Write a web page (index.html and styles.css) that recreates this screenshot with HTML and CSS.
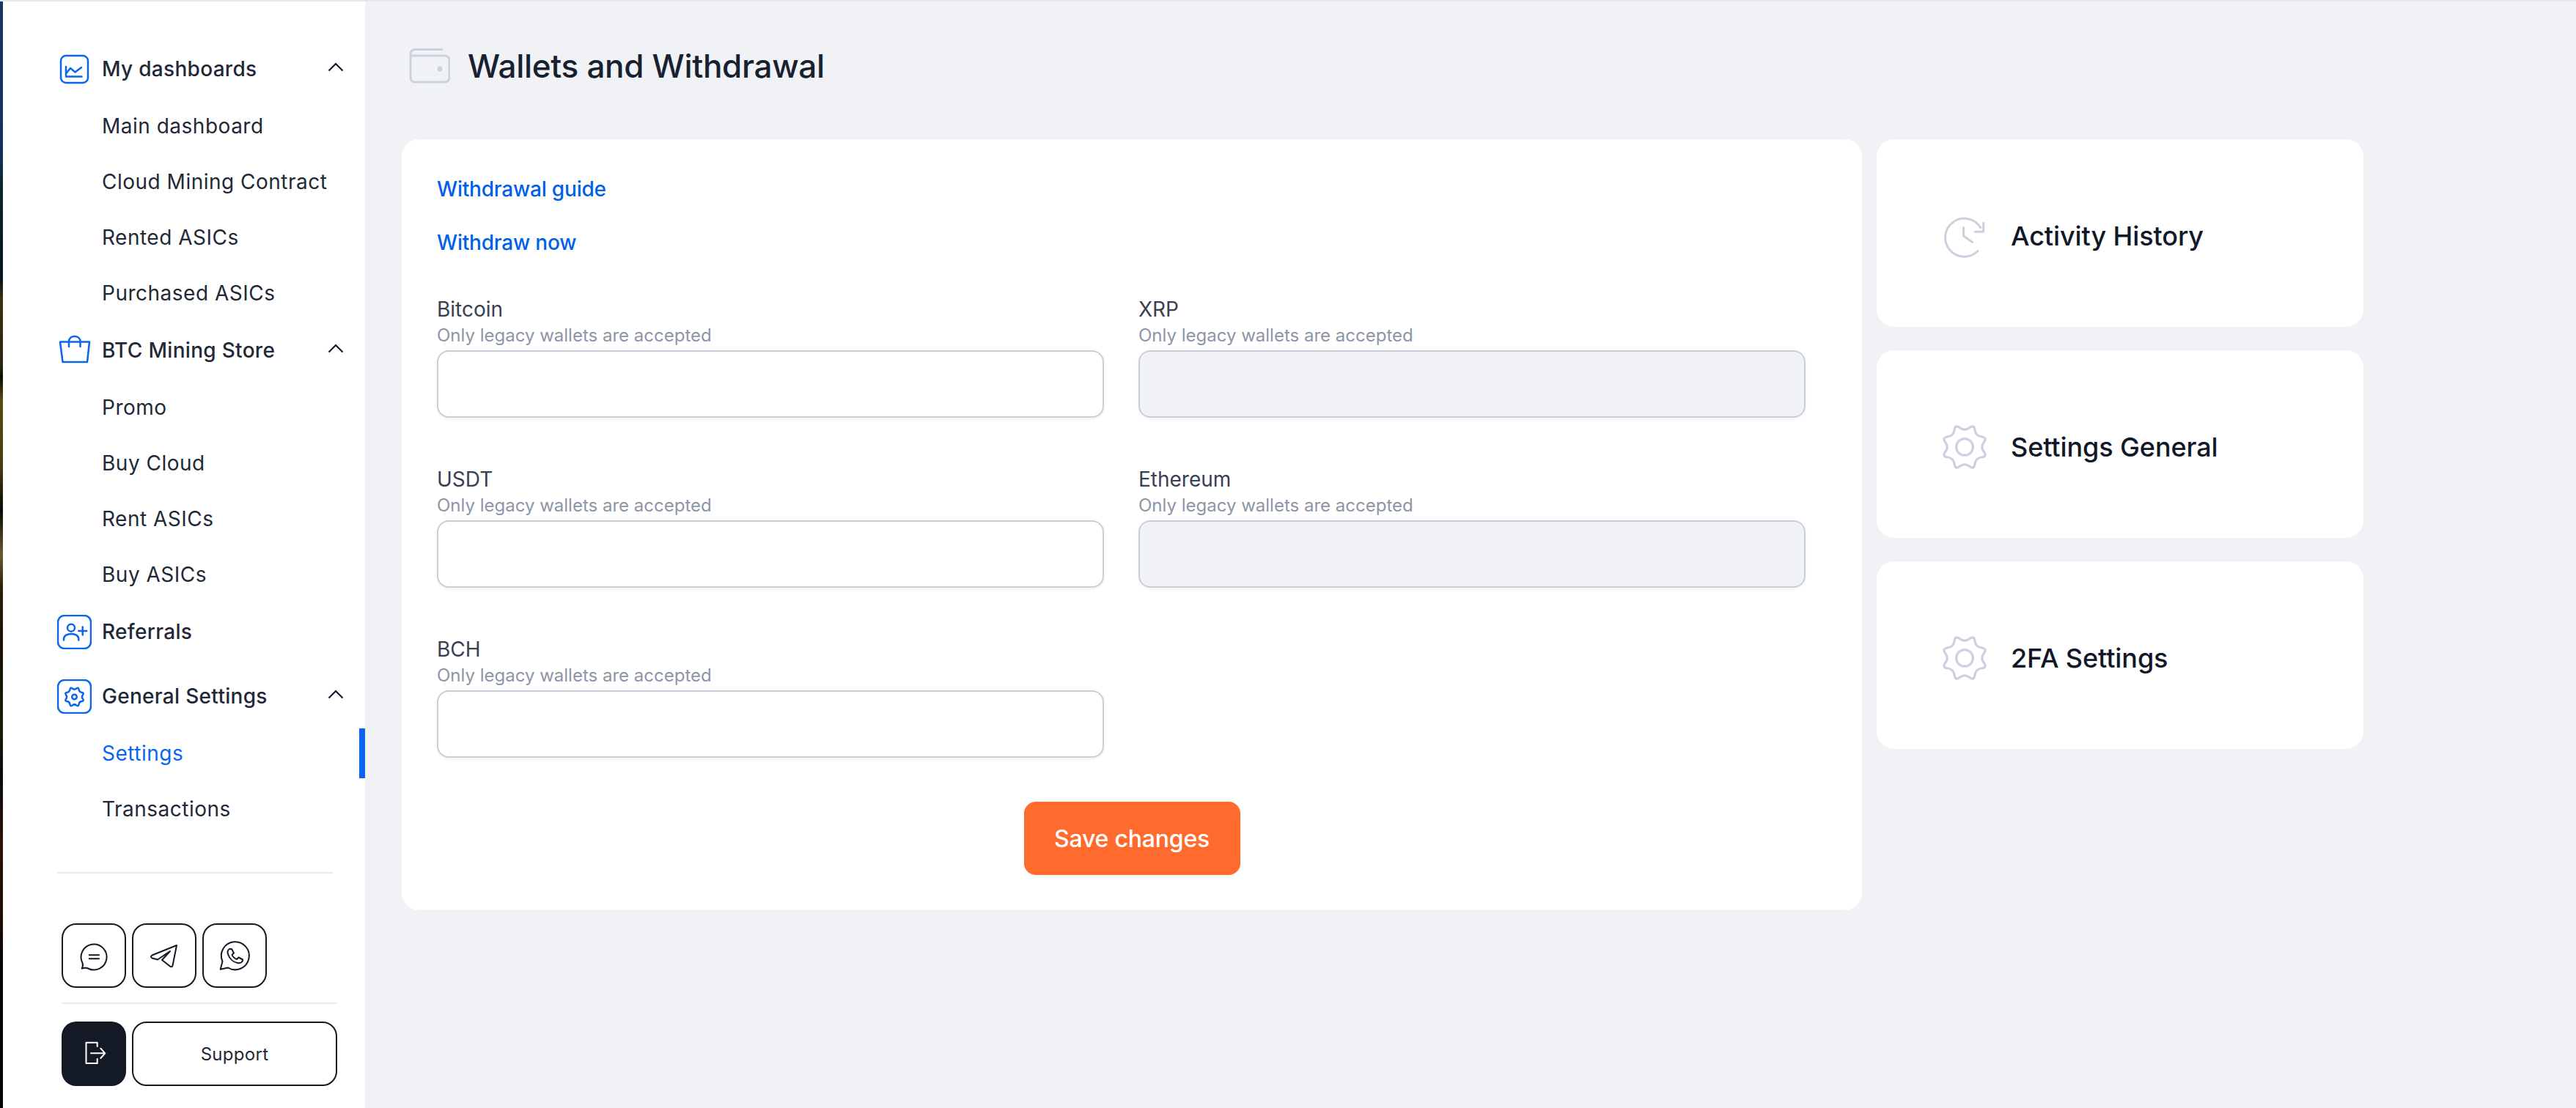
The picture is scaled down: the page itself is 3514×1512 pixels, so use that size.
FILE: index.html
```html
<!DOCTYPE html>
<html lang="en">
<head>
<meta charset="utf-8">
<title>Wallets and Withdrawal</title>
<link rel="stylesheet" href="styles.css">
</head>
<body>
<div class="strip"></div>
<div class="app">
<aside class="sidebar">
  <nav class="nav">
    <div class="head">
      <span class="head-icon"><svg class="ico-blue" width="47" height="47" viewBox="0 0 47 47"><rect x="5" y="5" width="37" height="37" rx="7"/><path d="M12 20V33.5H33.5"/><path d="M12 29.5L18 22L24.5 27.5L33 21"/></svg></span>
      <span class="head-label">My dashboards</span>
      <svg class="chev" width="22" height="13" viewBox="0 0 22 13"><path d="M1.5 11.5L11 2L20.5 11.5"/></svg>
    </div>
    <a class="sub">Main dashboard</a>
    <a class="sub">Cloud Mining Contract</a>
    <a class="sub">Rented ASICs</a>
    <a class="sub">Purchased ASICs</a>
    <div class="head">
      <span class="head-icon"><svg class="ico-blue" width="47" height="47" viewBox="0 0 47 47"><path d="M4 11.5H44L41 39H7.5Z"/><path d="M16 18V11C16 1.500 31.500 1.500 31.500 11V18"/></svg></span>
      <span class="head-label">BTC Mining Store</span>
      <svg class="chev" width="22" height="13" viewBox="0 0 22 13"><path d="M1.5 11.5L11 2L20.5 11.500"/></svg>
    </div>
    <a class="sub">Promo</a>
    <a class="sub">Buy Cloud</a>
    <a class="sub">Rent ASICs</a>
    <a class="sub">Buy ASICs</a>
    <div class="head">
      <span class="head-icon"><svg class="ico-blue" width="47" height="47" viewBox="0 0 47 47"><rect x="1" y="1" width="45" height="45" rx="9"/><circle cx="19" cy="17.700" r="5"/><path d="M9 34.500V33C9 23.500 29.300 23.500 29.300 33V34.500"/><path d="M34.700 16.500V27.500M29.200 22H40.200"/></svg></span>
      <span class="head-label">Referrals</span>
    </div>
    <div class="head head-spaced">
      <span class="head-icon"><svg class="ico-blue" width="47" height="47" viewBox="0 0 47 47"><rect x="1" y="1" width="45" height="45" rx="9"/><g transform="translate(9.400 9.900) scale(.47)"><path class="thick" d="M24.020 5.710Q30 10.300 35.980 5.710T42.950 8.600T51.400 17.050T54.290 24.020T54.290 35.980T51.400 42.950T42.950 51.400T35.980 54.290T24.020 54.290T17.050 51.400T8.600 42.950T5.710 35.980T5.710 24.020T8.600 17.050T17.050 8.600T24.020 5.710Z"/><circle class="thick" cx="30" cy="30" r="7"/></g></svg></span>
      <span class="head-label">General Settings</span>
      <svg class="chev" width="22" height="13" viewBox="0 0 22 13"><path d="M1.500 11.500L11 2L20.500 11.500"/></svg>
    </div>
    <a class="sub sub-active">Settings</a>
    <a class="sub">Transactions</a>
  </nav>
  <div class="rule rule-first"></div>
  <div class="bottom">
    <div class="socials">
      <button class="square"><svg class="ico-dark" width="84" height="84" viewBox="0 0 84 84"><path d="M25.700 59.700C27 57 27.500 55 26.500 52A17.500 17.500 0 1 1 34 59.500C31 58 28 59 25.700 59.700Z"/><path d="M35.700 41.300H49M35.700 46.300H49"/></svg></button>
      <button class="square"><svg class="ico-dark" width="84" height="84" viewBox="0 0 84 84"><path d="M59 28L25.500 41.500Q22.500 43.500 25.500 45.500L33 47.500L50 36L39 48L50.500 57Q53 58 53.500 55.500Z"/></svg></button>
      <button class="square"><svg class="ico-dark" width="84" height="84" viewBox="0 0 84 84"><path d="M22.700 60.700L25.500 50A19 19 0 1 1 33 58.500Z"/><path d="M35 33C32.500 34.500 32 37 33 40C35 46 40 51 46 52C49 52.500 52 51.500 53 49L53 47.500L47.500 44.500L45 47C42 46 39.500 43.500 38.500 41L41 38.500L38 33Z"/></svg></button>
    </div>
    <div class="rule rule-second"></div>
    <div class="actions">
      <button class="square square-dark"><svg class="ico-white" width="88" height="88" viewBox="0 0 88 88"><path d="M48.700 34V28.700H33.500V57H48.700V51"/><path d="M40 43.300H59.300M53.300 36.700L59.300 43.300L53.300 50"/></svg></button>
      <button class="support">Support</button>
    </div>
  </div>
</aside>
<main class="main">
  <header class="title-row">
    <svg class="ico-grey" width="56" height="50" viewBox="13 10 56 50"><path d="M58 12.500H21A6 6 0 0 0 15 18.500V51A6 6 0 0 0 21 57H62A6 6 0 0 0 68 51V27A6 6 0 0 0 62 21H15"/><circle class="dot" cx="55" cy="39" r="2"/></svg>
    <h1 class="title">Wallets and Withdrawal</h1>
  </header>
  <div class="content">
    <section class="card form-card">
      <a class="link">Withdrawal guide</a>
      <a class="link link-next">Withdraw now</a>
      <div class="fields">
        <div class="field">
          <label class="label">Bitcoin</label>
          <div class="hint">Only legacy wallets are accepted</div>
          <input class="input">
        </div>
        <div class="field">
          <label class="label">XRP</label>
          <div class="hint">Only legacy wallets are accepted</div>
          <input class="input" disabled>
        </div>
        <div class="field">
          <label class="label">USDT</label>
          <div class="hint">Only legacy wallets are accepted</div>
          <input class="input">
        </div>
        <div class="field">
          <label class="label">Ethereum</label>
          <div class="hint">Only legacy wallets are accepted</div>
          <input class="input" disabled>
        </div>
        <div class="field">
          <label class="label">BCH</label>
          <div class="hint">Only legacy wallets are accepted</div>
          <input class="input">
        </div>
      </div>
      <div class="save-row"><button class="save">Save changes</button></div>
    </section>
    <aside class="side">
      <a class="card side-card">
        <svg class="ico-grey side-icon" width="80" height="70" viewBox="0 0 80 70"><path d="M62 24A26 26 0 1 0 58 55.500"/><path d="M65.700 17V29.300H54"/><path d="M38.500 23.500V35L50.500 43.500"/></svg>
        <span class="side-label">Activity History</span>
      </a>
      <a class="card side-card">
        <svg class="ico-grey side-icon" width="80" height="70" viewBox="-7 -2.375 74 64.750"><path d="M24.020 5.710Q30 10.300 35.980 5.710T42.950 8.600T51.400 17.050T54.290 24.020T54.290 35.980T51.400 42.950T42.950 51.400T35.980 54.290T24.020 54.290T17.050 51.400T8.600 42.950T5.710 35.980T5.710 24.020T8.600 17.050T17.050 8.600T24.020 5.710Z"/><circle cx="30" cy="30" r="10.500"/></svg>
        <span class="side-label">Settings General</span>
      </a>
      <a class="card side-card">
        <svg class="ico-grey side-icon" width="80" height="70" viewBox="-7 -2.375 74 64.750"><path d="M24.020 5.710Q30 10.300 35.980 5.710T42.950 8.600T51.400 17.050T54.290 24.020T54.290 35.980T51.400 42.950T42.950 51.400T35.980 54.290T24.020 54.290T17.050 51.400T8.600 42.950T5.710 35.980T5.710 24.020T8.600 17.050T17.050 8.600T24.020 5.710Z"/><circle cx="30" cy="30" r="10.500"/></svg>
        <span class="side-label">2FA Settings</span>
      </a>
    </aside>
  </div>
</main>
</div>
</body>
</html>
```
FILE: styles.css
```css
* { box-sizing: border-box; }
html, body { margin: 0; height: 100%; }
body {
  display: flex;
  flex-direction: column;
  height: 1512px;
  overflow: hidden;
  background: #f0f2f6;
  font-family: Inter, "Liberation Sans", sans-serif;
  color: #1f2937;
}
.strip { height: 2px; flex: none; background: #e6e7ea; }
.app {
  flex: 1;
  display: flex;
  min-height: 0;
  border-left: 4px solid;
  border-image: linear-gradient(180deg, #1a3560 0, #16305a 14%, #0b2528 17%, #07141c 25%, #3b3110 27%, #2b2410 33%, #0b0e08 34%, #5a4a12 36%, #4a3c10 42%, #0a0a05 46%, #6a5c30 50%, #2a2008 53%, #1c1008 58%, #132006 66%, #0a0a10 70%, #2c1208 76%, #1d0c06 83%, #050505 87%, #050505 100%) 1;
}
.sidebar {
  width: 494px;
  flex: none;
  background: #fff;
  padding-top: 52px;
}
.nav { display: flex; flex-direction: column; }
.head {
  display: flex;
  align-items: center;
  height: 80px;
  padding: 0 30px 0 74px;
  font-size: 28px;
  font-weight: 500;
  color: #1f2937;
}
.head-spaced { margin-top: 8px; }
.head-icon { width: 47px; height: 47px; margin-right: 14px; flex: none; }
.head-icon svg { display: block; }
.head-label { flex: 1; letter-spacing: .3px; }
.chev { fill: none; stroke: #111827; stroke-width: 2.2; margin: 0 -1px 5px 0; }
.ico-blue { fill: none; stroke: #0a66ee; stroke-width: 2.5; stroke-linecap: round; stroke-linejoin: round; }
.ico-blue .thick { stroke-width: 5.3; }
.ico-dark { fill: none; stroke: #131a26; stroke-width: 2; stroke-linecap: round; stroke-linejoin: round; }
.ico-white { fill: none; stroke: #fff; stroke-width: 2; stroke-linecap: round; stroke-linejoin: round; }
.ico-grey { fill: none; stroke: #cbd2dd; stroke-width: 3; stroke-linecap: round; stroke-linejoin: round; }
.ico-grey .dot { fill: #cbd2dd; }
.sub {
  display: flex;
  align-items: center;
  height: 76px;
  padding-left: 135px;
  font-size: 28px;
  letter-spacing: .5px;
  color: #1f2937;
}
.sub-active {
  color: #0a66ee;
  position: relative;
}
.sub-active::after {
  content: "";
  position: absolute;
  right: 0;
  top: 4px;
  bottom: 4px;
  width: 8px;
  background: #0a66ee;
}
.rule { height: 2px; background: #eaebef; width: 376px; }
.rule-first { margin: 48px 0 68px 74px; }
.rule-second { margin: 20px 0 24px; }
.bottom { margin-left: 80px; width: 376px; }
.socials, .actions { display: flex; gap: 8px; }
.square {
  width: 88px;
  height: 88px;
  padding: 0;
  display: flex;
  align-items: center;
  justify-content: center;
  background: #fff;
  border: 2px solid #131a26;
  border-radius: 20px;
}
.square-dark { background: #131a26; border: 0; }
.support {
  flex: 1;
  height: 88px;
  background: #fff;
  border: 2px solid #131a26;
  border-radius: 20px;
  font: 400 24px Inter, "Liberation Sans", sans-serif;
  letter-spacing: .3px;
  color: #1f2937;
}
.main { flex: 1; min-width: 0; padding: 64px 0 0 50px; }
.title-row {
  display: flex;
  align-items: center;
  height: 48px;
  margin: 0 0 76px 10px;
  gap: 24px;
}
.title { margin: 0; font-size: 44px; font-weight: 500; letter-spacing: -.3px; color: #18212f; }
.content { display: flex; align-items: flex-start; gap: 20px; }
.card { background: #fff; border-radius: 24px; }
.form-card { width: 1992px; padding: 48px; }
.link {
  display: block;
  font-size: 28px;
  line-height: 40px;
  font-weight: 500;
  letter-spacing: -.2px;
  color: #0060e6;
}
.link-next { margin-top: 33px; }
.fields {
  display: grid;
  grid-template-columns: 910px 910px;
  column-gap: 47px;
  row-gap: 67px;
  margin-top: 54px;
}
.label { display: block; font-size: 28px; line-height: 34px; color: #374151; }
.hint { margin: 5px 0 6px; font-size: 24px; line-height: 28px; color: #8d95a6; }
.input {
  display: block;
  width: 100%;
  height: 92px;
  background: #fff;
  border: 2px solid #c8ced9;
  border-radius: 16px;
  box-shadow: 0 2px 4px rgba(0, 0, 0, .05);
}
.input:disabled { background: #f0f2f6; }
.save-row { display: flex; justify-content: center; margin-top: 60px; }
.save {
  width: 295px;
  height: 100px;
  background: #ff6b2e;
  border: 0;
  border-radius: 16px;
  box-shadow: 0 2px 4px rgba(0, 0, 0, .05);
  font: 500 32px Inter, "Liberation Sans", sans-serif;
  letter-spacing: -.2px;
  color: #fff;
}
.side { width: 664px; display: flex; flex-direction: column; gap: 32px; }
.side-card {
  display: flex;
  align-items: center;
  height: 256px;
  padding: 8px 0 0 80px;
}
.side-icon { flex: none; margin-right: 23px; }
.side-label { font-size: 36px; font-weight: 500; letter-spacing: -.1px; color: #111827; }
```
